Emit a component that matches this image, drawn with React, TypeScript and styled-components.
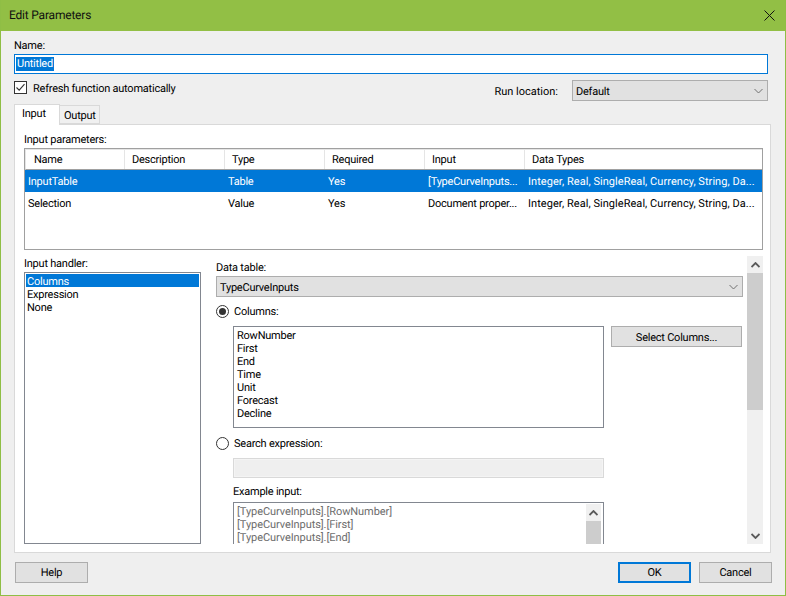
import React from "react";
import styled, { createGlobalStyle } from "styled-components";

const Global = createGlobalStyle`
  html, body { margin: 0; padding: 0; background: #efefef; }
  * { box-sizing: border-box; }
  body { font-family: Roboto, "Liberation Sans", sans-serif; font-size: 11px; letter-spacing: -0.23px; line-height: 13px; color: #000; text-rendering: geometricPrecision; }
`;

const Window = styled.div`
  width: 786px; height: 596px; display: flex; flex-direction: column; overflow: hidden;
  background: #efefef; border: 1px solid #8fbe45; border-top: 0;
`;
const TitleBar = styled.div`
  height: 31px; flex: none; margin: 0 -1px; background: #92bf45; display: flex; align-items: center; justify-content: space-between;
  padding: 0 11px 0 9px; font-size: 12px; letter-spacing: -0.2px; color: #101010;
`;
const Body = styled.div`
  flex: 1; display: flex; flex-direction: column; padding: 8px 14px 0 13px; min-height: 0;
`;
const Label = styled.div`
  height: 13px; white-space: nowrap; flex: none;
`;
const NameInput = styled.div`
  height: 20px; margin-top: 2px; margin-right: 3px; flex: none; background: #fff; border: 1px solid #0078d7; padding: 2px 1px; display: flex;
`;
const Selected = styled.span`
  background: #0078d7; color: #fff; height: 14px; line-height: 14px; padding: 0 1px;
`;
const OptionsRow = styled.div`
  height: 21px; margin-top: 6px; margin-right: 3px; flex: none; display: flex; align-items: center; justify-content: space-between;
`;
const CheckRow = styled.div`
  display: flex; align-items: center; gap: 6px; margin-top: -6px;
`;
const CheckBox = styled.span`
  width: 13px; height: 13px; background: #fff; border: 1px solid #333; display: flex; align-items: center; justify-content: center;
`;
const CheckText = styled.span`
  padding-top: 2px;
`;
const RunGroup = styled.div`
  display: flex; align-items: center; gap: 14px;
`;
const RunLabel = styled.span`
  padding-top: 2px; letter-spacing: 0;
`;
const Dropdown = styled.div<{ $w: string }>`
  width: ${(p) => p.$w}; height: 21px; flex: none; background: #e1e1e1; border: 1px solid #adadad; display: flex; align-items: center;
  justify-content: space-between; padding: 1px 4px 0 3px;
`;
const DataDropdown = styled(Dropdown)`
  margin-top: 2px;
`;
const Tabs = styled.div`
  height: 21px; margin-top: 2px; flex: none; display: flex; align-items: flex-end; position: relative; z-index: 1;
`;
const Tab = styled.div<{ $active?: boolean }>`
  height: ${(p) => (p.$active ? "21px" : "19px")}; width: ${(p) => (p.$active ? "46px" : "40px")};
  background: ${(p) => (p.$active ? "#fff" : "#f0f0f0")};
  border: 1px solid #d9d9d9; border-left: ${(p) => (p.$active ? "1px solid #d9d9d9" : "0")};
  border-bottom: ${(p) => (p.$active ? "0" : "1px solid #d9d9d9")};
  padding: ${(p) => (p.$active ? "2px 0 0 7px" : "3px 0 0 4px")};
  margin-bottom: ${(p) => (p.$active ? "-1px" : "0")};
`;
const Panel = styled.div`
  width: 757px; height: 429px; flex: none; background: #fff; border: 1px solid #d9d9d9; padding: 8px 7px 0 9px; display: flex; flex-direction: column;
`;
const Table = styled.div`
  height: 102px; margin-top: 2px; flex: none; border: 1px solid #a0a0a0; display: flex; flex-direction: column;
`;
const Row = styled.div<{ $sel?: boolean }>`
  display: grid; grid-template-columns: 100px 100px 100px 100px 100px 1fr; flex: none; white-space: nowrap;
  height: 22px; align-items: center;
  background: ${(p) => (p.$sel ? "#0078d7" : "#fff")}; color: ${(p) => (p.$sel ? "#fff" : "#000")};
`;
const HeadRow = styled.div`
  display: grid; grid-template-columns: 99px 100px 100px 100px 100px 1fr; flex: none; white-space: nowrap;
  height: 21px; align-items: center;
  border-bottom: 1px solid #a0a0a0; border-top: 1px solid #e5e5e5; border-left: 1px solid #e5e5e5;
`;
const HeadCell = styled.div`
  height: 100%; display: flex; align-items: center; padding-left: 7px; border-right: 1px solid #e5e5e5;
  &:first-child { padding-left: 8px; }
  &:last-child { border-right: 0; }
`;
const Cell = styled.div`
  padding-left: 3px; overflow: hidden;
`;
const TypesCell = styled(Cell)`
  letter-spacing: 0.05px;
`;
const Lower = styled.div`
  flex: 1; display: flex; margin-top: 6px; min-height: 0;
`;
const HandlerCol = styled.div`
  width: 177px; flex: none; padding-top: 1px; margin-right: 15px;
  display: flex; flex-direction: column;
`;
const HandlerList = styled.div`
  height: 272px; flex: none; margin-top: 2px; border: 1px solid #828790; padding: 1px; background: #fff;
`;
const Item = styled.div<{ $sel?: boolean }>`
  height: 13px; padding-left: 1px; white-space: nowrap;
  background: ${(p) => (p.$sel ? "#0078d7" : "transparent")}; color: ${(p) => (p.$sel ? "#fff" : "inherit")};
`;
const HandlerItem = styled(Item)`
  line-height: 15px;
`;
const ScrollPane = styled.div`
  flex: 1; height: 288px; display: flex; overflow: hidden;
`;
const PaneContent = styled.div`
  width: 531px; flex: none; padding-top: 5px; display: flex; flex-direction: column;
`;
const RadioRow = styled.div<{ $top: string }>`
  display: flex; align-items: center; gap: 5px; height: 13px; flex: none; margin-top: ${(p) => p.$top};
`;
const RadioText = styled.span`
  line-height: 15px;
`;
const Radio = styled.span<{ $on?: boolean }>`
  width: 13px; height: 13px; border-radius: 50%; border: 1px solid #333; background: #fff; flex: none; position: relative;
  ${(p) =>
    p.$on
      ? `&::after { content: ""; position: absolute; left: 2px; top: 2px; width: 7px; height: 7px; border-radius: 50%; background: #333; }`
      : ""}
`;
const ColumnsRow = styled.div`
  display: flex; gap: 7px; margin: 8px 0 0 17px; align-items: flex-start; flex: none;
`;
const ListBox = styled.div<{ $h: string }>`
  width: 371px; height: ${(p) => p.$h}; flex: none; border: 1px solid #828790; background: #fff; padding: 2px 3px 3px 2px; position: relative;
`;
const ExampleBox = styled(ListBox)`
  margin-top: 4px;
`;
const Button = styled.div<{ $primary?: boolean; $w?: string }>`
  width: ${(p) => p.$w || "73px"}; height: 21px; flex: none; background: #e1e1e1; display: flex; align-items: center; justify-content: center;
  border: ${(p) => (p.$primary ? "2px solid #0078d7" : "1px solid #adadad")};
`;
const SelectButton = styled(Button)`
  padding-top: 2px;
`;
const DisabledInput = styled.div`
  width: 371px; height: 20px; flex: none; margin: 8px 0 0 17px; background: #efefef; border: 1px solid #d9d9d9; box-shadow: inset 0 0 0 1px #f4f4f4;
`;
const Indented = styled.div`
  margin: 7px 0 0 17px; display: flex; flex-direction: column; flex: none;
`;
const Gray = styled.div`
  height: 13px; color: #6d6d6d; white-space: nowrap; padding-left: 1px; letter-spacing: -0.08px;
`;
const InnerScroll = styled.div`
  position: absolute; right: 2px; top: 1px; width: 15px; height: 60px; background: #f0f0f0; display: flex; flex-direction: column;
`;
const InnerArrow = styled.div`
  height: 17px; display: flex; align-items: center; justify-content: center; flex: none;
`;
const InnerThumb = styled.div`
  height: 40px; background: #cdcdcd;
`;
const ScrollBar = styled.div`
  width: 16px; height: 288px; flex: none; background: #f0f0f0; display: flex; flex-direction: column;
`;
const Thumb = styled.div`
  height: 137px; background: #cdcdcd; flex: none;
`;
const Spacer = styled.div`
  flex: 1;
`;
const Footer = styled.div`
  height: 21px; margin: 9px -1px 0 1px; flex: none; display: flex; align-items: center; gap: 8px;
`;

const Chevron = ({ up, heavy }: { up?: boolean; heavy?: boolean }) => (
  <svg width="9" height="6" viewBox="0 0 9 6" fill="none">
    <path d={up ? "M0.5 5 L4.5 1 L8.5 5" : "M0.5 1 L4.5 5 L8.5 1"} stroke={heavy ? "#5a5a5a" : "#707070"} strokeWidth={heavy ? 1.8 : 1} />
  </svg>
);

const cols = ["RowNumber", "First", "End", "Time", "Unit", "Forecast", "Decline"];
const types = "Integer, Real, SingleReal, Currency, String, Da...";

export default function App() {
  return (
    <Window>
      <Global />
      <TitleBar>
        <span>Edit Parameters</span>
        <svg width="11" height="11" viewBox="0 0 11 11" fill="none">
          <path d="M0.5 0.5 L10.5 10.5 M10.5 0.5 L0.5 10.5" stroke="#111" strokeWidth="1" />
        </svg>
      </TitleBar>
      <Body>
        <Label>Name:</Label>
        <NameInput>
          <Selected>Untitled</Selected>
        </NameInput>
        <OptionsRow>
          <CheckRow>
            <CheckBox>
              <svg width="11" height="11" viewBox="0 0 11 11" fill="none">
                <path d="M1.5 5.5 L4.2 8.2 L9.5 2.2" stroke="#333" strokeWidth="1.1" />
              </svg>
            </CheckBox>
            <CheckText>Refresh function automatically</CheckText>
          </CheckRow>
          <RunGroup>
            <RunLabel>Run location:</RunLabel>
            <Dropdown $w="196px">
              <span>Default</span>
              <Chevron />
            </Dropdown>
          </RunGroup>
        </OptionsRow>
        <Tabs>
          <Tab $active>Input</Tab>
          <Tab>Output</Tab>
        </Tabs>
        <Panel>
          <Label>Input parameters:</Label>
          <Table>
            <HeadRow>
              {["Name", "Description", "Type", "Required", "Input", "Data Types"].map((h) => (
                <HeadCell key={h}>{h}</HeadCell>
              ))}
            </HeadRow>
            <Row $sel>
              <Cell>InputTable</Cell>
              <Cell />
              <Cell>Table</Cell>
              <Cell>Yes</Cell>
              <Cell>[TypeCurveInputs...</Cell>
              <TypesCell>{types}</TypesCell>
            </Row>
            <Row>
              <Cell>Selection</Cell>
              <Cell />
              <Cell>Value</Cell>
              <Cell>Yes</Cell>
              <Cell>Document proper...</Cell>
              <TypesCell>{types}</TypesCell>
            </Row>
          </Table>
          <Lower>
            <HandlerCol>
              <Label>Input handler:</Label>
              <HandlerList>
                <HandlerItem $sel>Columns</HandlerItem>
                <HandlerItem>Expression</HandlerItem>
                <HandlerItem>None</HandlerItem>
              </HandlerList>
            </HandlerCol>
            <ScrollPane>
              <PaneContent>
                <Label>Data table:</Label>
                <DataDropdown $w="527px">
                  <span>TypeCurveInputs</span>
                  <Chevron />
                </DataDropdown>
                <RadioRow $top="8px">
                  <Radio $on />
                  <RadioText>Columns:</RadioText>
                </RadioRow>
                <ColumnsRow>
                  <ListBox $h="102px">
                    {cols.map((c) => (
                      <Item key={c}>{c}</Item>
                    ))}
                  </ListBox>
                  <SelectButton $w="131px">Select Columns...</SelectButton>
                </ColumnsRow>
                <RadioRow $top="9px">
                  <Radio />
                  <RadioText>Search expression:</RadioText>
                </RadioRow>
                <DisabledInput />
                <Indented>
                  <Label>Example input:</Label>
                  <ExampleBox $h="60px">
                    <Gray>[TypeCurveInputs].[RowNumber]</Gray>
                    <Gray>[TypeCurveInputs].[First]</Gray>
                    <Gray>[TypeCurveInputs].[End]</Gray>
                    <InnerScroll>
                      <InnerArrow>
                        <Chevron up heavy />
                      </InnerArrow>
                      <InnerThumb />
                    </InnerScroll>
                  </ExampleBox>
                </Indented>
              </PaneContent>
              <ScrollBar>
                <InnerArrow>
                  <Chevron up heavy />
                </InnerArrow>
                <Thumb />
                <Spacer />
                <InnerArrow>
                  <Chevron heavy />
                </InnerArrow>
              </ScrollBar>
            </ScrollPane>
          </Lower>
        </Panel>
        <Footer>
          <Button>Help</Button>
          <Spacer />
          <Button $primary>OK</Button>
          <Button>Cancel</Button>
        </Footer>
      </Body>
    </Window>
  );
}
